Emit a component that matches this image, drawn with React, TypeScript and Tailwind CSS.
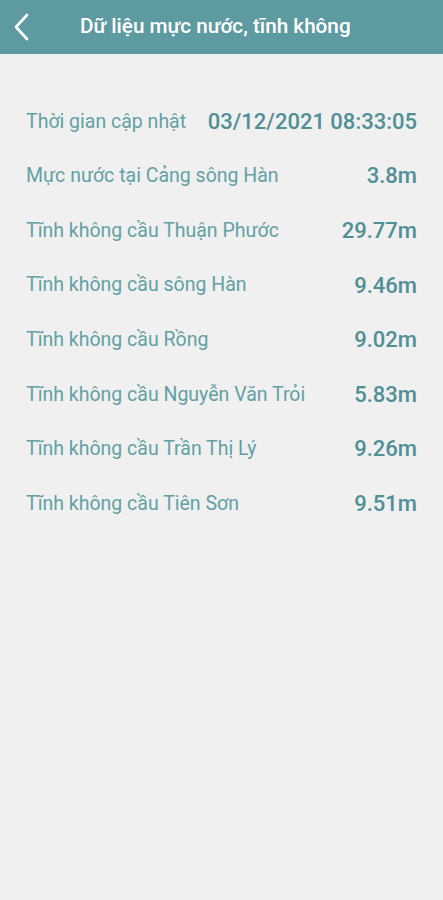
const ROWS: { label: string; value: string }[] = [
  { label: 'Thời gian cập nhật', value: '03/12/2021 08:33:05' },
  { label: 'Mực nước tại Cảng sông Hàn', value: '3.8m' },
  { label: 'Tĩnh không cầu Thuận Phước', value: '29.77m' },
  { label: 'Tĩnh không cầu sông Hàn', value: '9.46m' },
  { label: 'Tĩnh không cầu Rồng', value: '9.02m' },
  { label: 'Tĩnh không cầu Nguyễn Văn Trỏi', value: '5.83m' },
  { label: 'Tĩnh không cầu Trần Thị Lý', value: '9.26m' },
  { label: 'Tĩnh không cầu Tiên Sơn', value: '9.51m' },
];

export default function App() {
  return (
    <div className="min-h-[900px] w-full bg-[#f0f0f0] font-['Roboto',sans-serif]">
      {/* Top bar */}
      <div className="flex h-[54px] items-center bg-[#5e9ba1] px-3 text-white">
        <button className="flex h-10 w-8 items-center justify-start">
          <svg width="20" height="30" viewBox="0 0 20 30" fill="none">
            <path d="M15 3 L4 15 L15 27" stroke="white" strokeWidth="2.6" strokeLinecap="round" strokeLinejoin="round" />
          </svg>
        </button>
        <h1 className="ml-[36px] text-[20.7px] font-medium">Dữ liệu mực nước, tĩnh không</h1>
      </div>

      {/* Data list */}
      <div className="px-[26px] pt-[40px]">
        {ROWS.map((row) => (
          <div key={row.label} className="flex h-[54.6px] items-center justify-between">
            <span className="text-[19.5px] text-[#62a0a5]">{row.label}</span>
            <span className="text-[22px] font-medium text-[#4f8f95]">{row.value}</span>
          </div>
        ))}
      </div>
    </div>
  );
}
